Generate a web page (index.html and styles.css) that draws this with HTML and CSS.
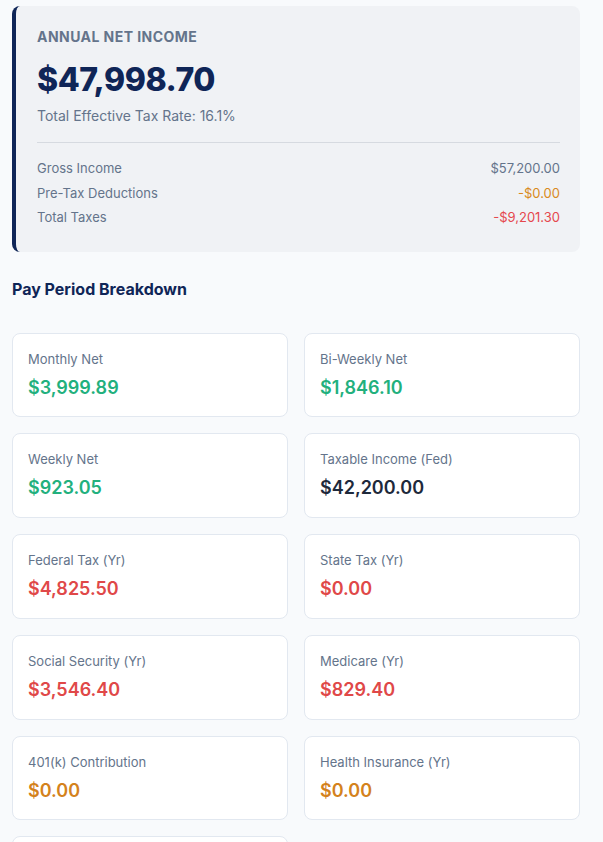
FILE: index.html
```html
<!DOCTYPE html>
<html lang="en">
<head>
<meta charset="utf-8">
<title>Net Income</title>
<link rel="stylesheet" href="styles.css">
</head>
<body>
<main class="page">
  <section class="summary">
    <div class="summary-label">Annual Net Income</div>
    <div class="summary-amount">$47,998.70</div>
    <div class="summary-rate">Total Effective Tax Rate: 16.1%</div>
    <div class="summary-rows">
      <div class="row"><span>Gross Income</span><span class="v-neutral">$57,200.00</span></div>
      <div class="row"><span>Pre-Tax Deductions</span><span class="v-orange">-$0.00</span></div>
      <div class="row"><span>Total Taxes</span><span class="v-red">-$9,201.30</span></div>
    </div>
  </section>

  <h2 class="section-title">Pay Period Breakdown</h2>

  <div class="grid">
    <div class="card"><div class="card-label">Monthly Net</div><div class="card-value green">$3,999.89</div></div>
    <div class="card"><div class="card-label">Bi-Weekly Net</div><div class="card-value green">$1,846.10</div></div>
    <div class="card"><div class="card-label">Weekly Net</div><div class="card-value green">$923.05</div></div>
    <div class="card"><div class="card-label">Taxable Income (Fed)</div><div class="card-value dark">$42,200.00</div></div>
    <div class="card"><div class="card-label">Federal Tax (Yr)</div><div class="card-value red">$4,825.50</div></div>
    <div class="card"><div class="card-label">State Tax (Yr)</div><div class="card-value red">$0.00</div></div>
    <div class="card"><div class="card-label">Social Security (Yr)</div><div class="card-value red">$3,546.40</div></div>
    <div class="card"><div class="card-label">Medicare (Yr)</div><div class="card-value red">$829.40</div></div>
    <div class="card"><div class="card-label">401(k) Contribution</div><div class="card-value orange">$0.00</div></div>
    <div class="card"><div class="card-label">Health Insurance (Yr)</div><div class="card-value orange">$0.00</div></div>
    <div class="card"><div class="card-label">Other Deductions (Yr)</div><div class="card-value orange">$0.00</div></div>
  </div>
</main>
</body>
</html>
```

FILE: styles.css
```css
* { box-sizing: border-box; }
html, body { margin: 0; padding: 0; }
body {
  background: #f8fafc;
  font-family: Inter, "Noto Sans", "Liberation Sans", sans-serif;
  color: #1e293b;
}
.page {
  padding: 6px 23px 40px 12px;
}
.summary {
  background: #f0f2f5;
  border-left: 4px solid #0f2557;
  border-radius: 8px;
  padding: 22px 20px 24px 21px;
}
.summary-label {
  font-size: 14px;
  font-weight: 700;
  text-transform: uppercase;
  letter-spacing: 0.45px;
  color: #64748b;
  line-height: 18px;
}
.summary-amount {
  font-size: 32px;
  font-weight: 800;
  color: #0f2557;
  line-height: 44px;
  margin-top: 12px;
  letter-spacing: -0.45px;
}
.summary-rate {
  font-size: 14px;
  color: #64748b;
  line-height: 20px;
  margin-top: 4px;
}
.summary-rows {
  border-top: 1px solid #d6dae0;
  margin-top: 16px;
  padding-top: 15px;
  display: flex;
  flex-direction: column;
  gap: 4px;
}
.row {
  display: flex;
  justify-content: space-between;
  font-size: 13px;
  line-height: 20.5px;
  color: #64748b;
}
.v-neutral { color: #64748b; }
.v-orange { color: #d98a1c; }
.v-red { color: #e5484d; }
.section-title {
  margin: 27px 0 0 0;
  font-size: 16px;
  font-weight: 700;
  color: #0f2557;
  line-height: 20px;
}
.grid {
  margin-top: 34px;
  display: grid;
  grid-template-columns: 1fr 1fr;
  column-gap: 16px;
  row-gap: 16px;
}
.card {
  background: #ffffff;
  border: 1px solid #e2e8f0;
  border-radius: 8px;
  padding: 16px 15px 16px 15px;
  height: 84.8px;
}
.card-label {
  font-size: 13px;
  color: #64748b;
  line-height: 18px;
}
.card-value {
  font-size: 18px;
  font-weight: 600;
  line-height: 24px;
  margin-top: 8px;
}
.green { color: #22b07d; }
.red { color: #e04848; }
.orange { color: #d4821c; }
.dark { color: #1e293b; }
```
